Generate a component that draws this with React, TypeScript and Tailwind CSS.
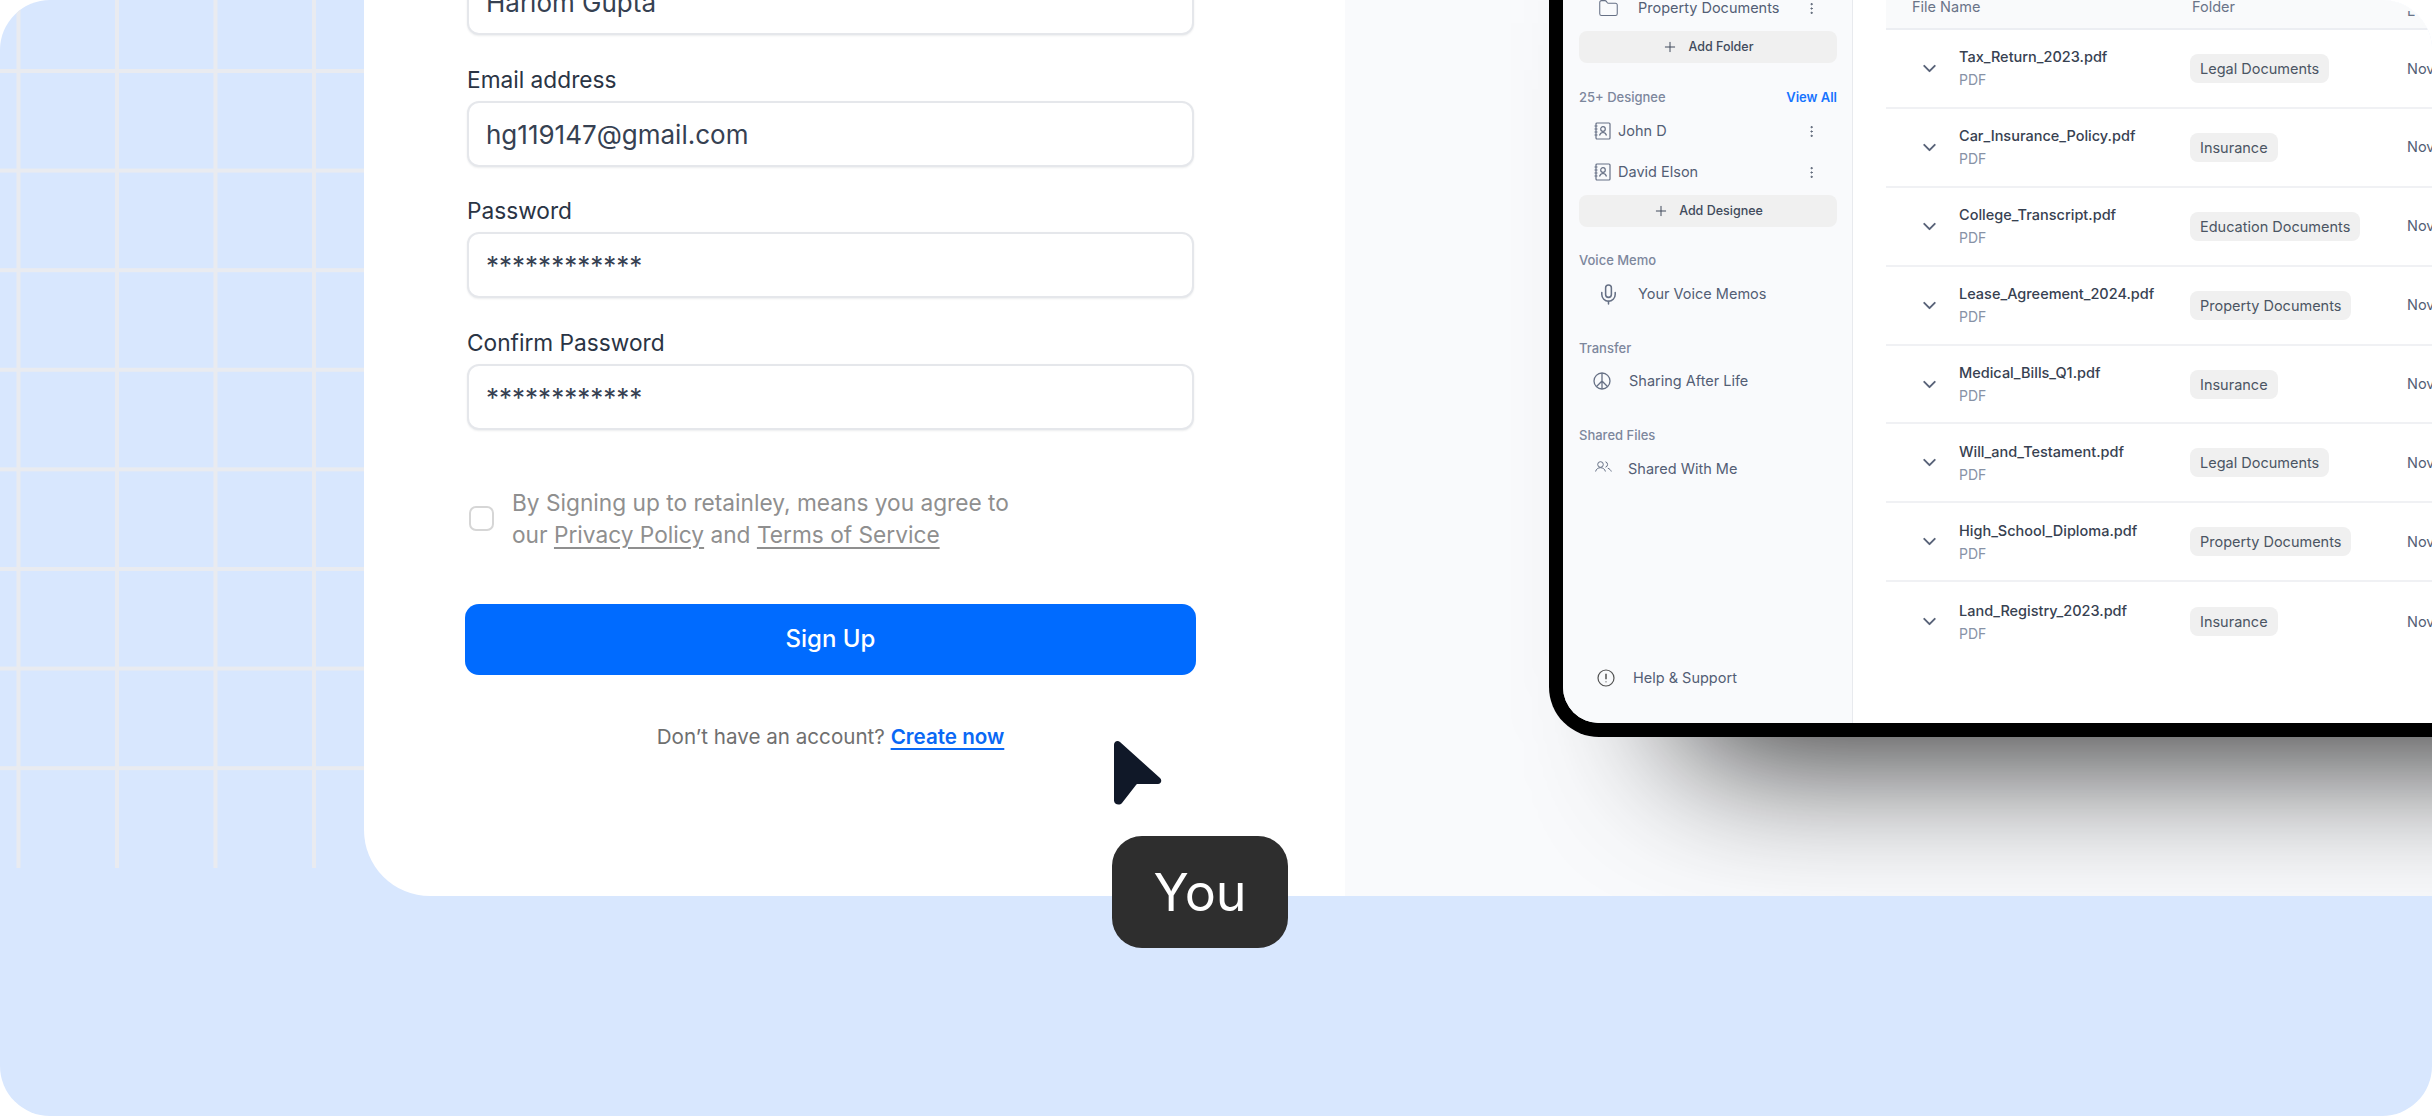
import { ChevronDown, EllipsisVertical, Folder, Mic, Plus } from 'lucide-react';

const FONT = "font-['Inter',sans-serif]";

const files = [
  { name: 'Tax_Return_2023.pdf', folder: 'Legal Documents' },
  { name: 'Car_Insurance_Policy.pdf', folder: 'Insurance' },
  { name: 'College_Transcript.pdf', folder: 'Education Documents' },
  { name: 'Lease_Agreement_2024.pdf', folder: 'Property Documents' },
  { name: 'Medical_Bills_Q1.pdf', folder: 'Insurance' },
  { name: 'Will_and_Testament.pdf', folder: 'Legal Documents' },
  { name: 'High_School_Diploma.pdf', folder: 'Property Documents' },
  { name: 'Land_Registry_2023.pdf', folder: 'Insurance' },
];

function ContactIcon() {
  return (
    <svg width="17" height="18" viewBox="0 0 17 18" fill="none" stroke="#667085" strokeWidth="1.2" className="shrink-0">
      <rect x="2" y="1" width="14" height="16" rx="1" />
      <circle cx="9" cy="7" r="2.3" />
      <path d="M5.500 13.500c.5-2 2-3 3.500-3s3 1 3.500 3" />
      <path d="M0.500 4h3M0.500 7h3M0.500 10h3M0.500 13h3" />
    </svg>
  );
}

function PeaceIcon() {
  return (
    <svg width="18" height="18" viewBox="0 0 18 18" fill="none" stroke="#667085" strokeWidth="1.3" className="shrink-0">
      <circle cx="9" cy="9" r="8" />
      <path d="M9 1v16M9 9l-5.700 5.700M9 9l5.700 5.700" />
    </svg>
  );
}

function HelpIcon() {
  return (
    <svg width="18" height="18" viewBox="0 0 18 18" fill="none" stroke="#525252" strokeWidth="1.2" className="shrink-0">
      <circle cx="9" cy="9" r="8" />
      <path d="M9 4.800v5.400M9 12.400v.9" strokeWidth="1.500" />
    </svg>
  );
}

function SharedIcon() {
  return (
    <svg width="17" height="11" viewBox="0 0 17 11" fill="none" stroke="#667085" strokeWidth="1" className="-mt-[6px] shrink-0">
      <circle cx="5.500" cy="3.500" r="2.800" />
      <path d="M0.600 10.500c.5-2.400 2.500-3.800 4.900-3.800s4.400 1.400 4.900 3.800" />
      <path d="M10.500 0.800a2.800 2.800 0 0 1 0 5.400" />
      <path d="M12.800 7.200c1.700.6 2.900 1.700 3.500 3.300" />
    </svg>
  );
}

function Field({ label, value }: { label: string; value: string }) {
  return (
    <div className="flex flex-col">
      <label className="h-[33px] text-[22.7px] leading-[23px] text-[#2a3444]">{label}</label>
      <div className="h-[66px] rounded-[12px] border-2 border-[#e5e7eb] bg-white px-[17px] text-[26px] leading-[64px] text-[#364152] shadow-[0_1px_2px_rgba(16,24,40,0.08)]">
        {value}
      </div>
    </div>
  );
}

function SideLabel({ children }: { children: string }) {
  return <div className="text-[13px] font-medium leading-4 text-[#7d879c]">{children}</div>;
}

function AddButton({ label }: { label: string }) {
  return (
    <div className="flex h-8 items-center justify-center gap-[10px] rounded-lg bg-[#f0f0f0] text-[12.5px] font-medium text-[#414b5c]">
      <Plus size={16} strokeWidth={1.5} />
      {label}
    </div>
  );
}

function Kebab() {
  return <EllipsisVertical size={15} strokeWidth={1.6} className="text-[#525c6e]" />;
}

function Sidebar() {
  return (
    <aside className="flex w-[290px] shrink-0 flex-col border-r border-[#e8eaee] bg-[#f9fafc] pl-[16px] pr-[15px] text-[14.5px] text-[#535e75]">
      <div className="flex h-[16px] items-center pl-[19px] pr-[18px]">
        <Folder size={21} strokeWidth={1.2} className="text-[#667085]" />
        <span className="ml-[19px] flex-1">Property Documents</span>
        <Kebab />
      </div>
      <div className="mt-[15px]">
        <AddButton label="Add Folder" />
      </div>
      <div className="mt-[26px] flex items-center justify-between">
        <SideLabel>25+ Designee</SideLabel>
        <span className="text-[13px] font-semibold leading-4 text-[#1673ff]">View All</span>
      </div>
      <div className="mt-[6px] flex h-[40px] items-center pl-[15px] pr-[18px]">
        <ContactIcon />
        <span className="ml-[7px] flex-1">John D</span>
        <Kebab />
      </div>
      <div className="mt-[1px] flex h-[40px] items-center pl-[15px] pr-[18px]">
        <ContactIcon />
        <span className="ml-[7px] flex-1">David Elson</span>
        <Kebab />
      </div>
      <div className="mt-[3px]">
        <AddButton label="Add Designee" />
      </div>
      <div className="mt-[25px]">
        <SideLabel>Voice Memo</SideLabel>
      </div>
      <div className="mt-[14px] flex h-[24px] items-center pl-[18px]">
        <Mic size={23} strokeWidth={1.6} className="text-[#667085]" />
        <span className="ml-[18px]">Your Voice Memos</span>
      </div>
      <div className="mt-[34px]">
        <SideLabel>Transfer</SideLabel>
      </div>
      <div className="mt-[13px] flex h-[24px] items-center pl-[14px]">
        <PeaceIcon />
        <span className="ml-[18px]">Sharing After Life</span>
      </div>
      <div className="mt-[34px]">
        <SideLabel>Shared Files</SideLabel>
      </div>
      <div className="mt-[14px] flex h-[24px] items-center pl-[16px]">
        <SharedIcon />
        <span className="ml-[16px]">Shared With Me</span>
      </div>
      <div className="mt-auto mb-[33px] flex h-[24px] items-center pl-[18px]">
        <HelpIcon />
        <span className="ml-[18px]">Help &amp; Support</span>
      </div>
    </aside>
  );
}

function FileTable() {
  return (
    <div className="min-w-0 flex-1 overflow-hidden bg-white pl-[33px]">
      <div className="flex h-[30px] w-[542px] items-end overflow-hidden rounded-tr-[38px] border-b-2 border-[#eceef2] bg-[#f9fafb] pb-[11px] text-[14.5px] leading-5 text-[#6a7488]">
        <span className="ml-[26px] w-[280px] shrink-0">File Name</span>
        <span className="w-[215px] shrink-0">Folder</span>
        {/* only the foot of this heading's first letter shows in the picture */}
        <span className="h-[6px] overflow-hidden leading-[0px]">L</span>
      </div>
      {files.map((file) => (
        <div key={file.name} className="flex h-[78.9px] items-center border-b-2 border-[#f0f1f4] last:border-b-0">
          <ChevronDown size={21} strokeWidth={2.2} className="ml-[33px] shrink-0 text-[#586278]" />
          <div className="ml-[19px] w-[231px] shrink-0">
            <div className="text-[14.5px] font-medium leading-[23px] text-[#374151]">{file.name}</div>
            <div className="text-[14px] leading-[23px] text-[#8792a6]">PDF</div>
          </div>
          <div className="w-[217px] shrink-0">
            <span className="inline-block h-[29px] rounded-lg bg-[#f0f0f0] px-[10px] text-[14.5px] leading-[29px] text-[#4b5563]">
              {file.folder}
            </span>
          </div>
          <span className="whitespace-nowrap text-[14.5px] text-[#535e75]">Nov 12, 2024</span>
        </div>
      ))}
    </div>
  );
}

export default function App() {
  return (
    <div className={`relative h-[1116px] w-[2432px] overflow-hidden rounded-[50px] bg-[#d8e7fe] ${FONT}`}>
      <div className="flex h-[896px]">
        {/* grid pattern column */}
        <div className="w-[364px] shrink-0">
          <div className="h-[868px] bg-[linear-gradient(to_right,#e9ebf0_4px,transparent_4px)] bg-size-[98.5px_100%] bg-position-[16.5px_0]">
            <div className="h-[860px] bg-[linear-gradient(to_bottom,#e9ebf0_4px,transparent_4px)] bg-size-[100%_99.6px] bg-position-[0_69px]" />
          </div>
        </div>

        <div className="flex flex-1 overflow-hidden rounded-bl-[66px] bg-white">
          {/* sign up form, its top is cropped by the picture */}
          <div className="w-[981px] shrink-0 pl-[103px]">
            <div className="-mt-[64px] flex w-[727px] flex-col gap-[32.5px]">
              <Field label="Full name" value="Hariom Gupta" />
              <Field label="Email address" value="hg119147@gmail.com" />
              <Field label="Password" value="************" />
              <Field label="Confirm Password" value="************" />
            </div>

            <div className="mt-[57px] ml-[2px] flex items-center">
              <div className="h-[25px] w-[25px] rounded-[7px] border-2 border-[#d6d6d6] bg-white" />
              <p className="ml-[18px] text-[22.7px] leading-[32px] text-[#8f8f8f]">
                By Signing up to retainley, means you agree to
                <br />
                our <span className="underline underline-offset-4">Privacy Policy</span> and{' '}
                <span className="underline underline-offset-4">Terms of Service</span>
              </p>
            </div>

            <div className="mt-[53px] -ml-[2px] flex h-[71px] w-[731px] items-center justify-center rounded-[14px] bg-[#006bff] text-[24px] font-medium text-white">
              Sign Up
            </div>

            <p className="mt-[46px] -ml-[2px] w-[731px] text-center text-[20.6px] leading-8 text-[#6f6f6f]">
              Don’t have an account?{' '}
              <span className="font-semibold text-[#0a68f5] underline underline-offset-4">Create now</span>
            </p>
          </div>

          {/* product preview */}
          <div className="flex-1 overflow-hidden bg-[#f9fafc] pl-[204px]">
            <div className="flex h-[737px] w-[1200px] overflow-hidden rounded-bl-[50px] border-[14px] border-t-0 border-black shadow-[130px_23px_140px_rgba(0,0,0,0.8)]">
              <Sidebar />
              <FileTable />
            </div>
          </div>
        </div>
      </div>

      {/* cursor and its tag */}
      <svg width="50" height="66" viewBox="0 0 50 66" className="absolute left-[1113px] top-[740px]">
        <path
          d="M1 5c0-3.500 3.500-5 6-3l40 36c2.500 2.300 1 6-2 6H25c-1 0-1.500.4-2 1L9 63c-2.500 3-8 1.500-8-2.500z"
          fill="#101828"
        />
      </svg>
      <div className="absolute left-[1112px] top-[836px] flex h-[112px] w-[176px] items-center justify-center rounded-[30px] bg-[#2e2e2e] pt-[2px] text-[52px] text-white">
        You
      </div>
    </div>
  );
}
